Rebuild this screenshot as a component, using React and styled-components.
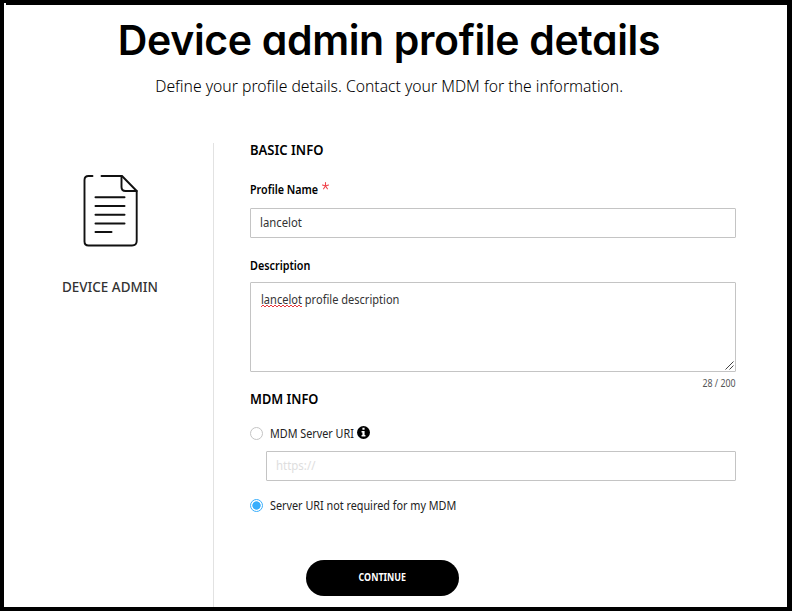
import React from "react";
import styled, { createGlobalStyle } from "styled-components";

const GlobalStyle = createGlobalStyle`
  * { box-sizing: border-box; }
  body { margin: 0; background: #fff; font-family: "Noto Sans", sans-serif; color: #000; }
`;

const Frame = styled.div`
  position: relative;
  display: flex;
  flex-direction: column;
  width: 792px;
  height: 611px;
  padding-top: 10px;
  border: solid #000;
  border-width: 5px 5px 4px 4px;
  background: #fff;
`;

const CornerNotch = styled.i`
  position: absolute;
  top: -2px;
  left: 0;
  width: 2px;
  height: 2px;
  background: #fff;
`;

/* Horizontally condensed run of text; `$x` is the width factor. */
const Narrow = styled.span`
  display: inline-block;
  white-space: nowrap;
  transform: scaleX(${(p) => p.$x});
  transform-origin: ${(p) => p.$from || "left"} center;
`;

const Title = styled.h1`
  margin: 0 0 10px;
  padding-right: 13px;
  text-align: center;
  font: 600 41px/50px Inter, sans-serif;
  font-feature-settings: "cv11";
  letter-spacing: -0.35px;
`;

const Subtitle = styled.p`
  margin: 0 0 46px;
  padding-right: 13px;
  text-align: center;
  font-size: 17px;
  line-height: 22px;
  font-weight: 300;
`;

const Columns = styled.div`
  display: flex;
  flex: 1;
`;

const Aside = styled.aside`
  display: flex;
  flex-direction: column;
  width: 210px;
  padding: 31px 0 0 58px;
  border-right: 1px solid #e2e2e2;
`;

const DocIcon = styled.svg`
  display: block;
  width: 58px;
  height: 74px;
  margin-left: 20px;
`;

const AsideLabel = styled.div`
  margin-top: 30px;
  font-size: 14px;
  line-height: 18px;
  font-weight: 500;
  color: #333;
`;

const Form = styled.main`
  display: flex;
  flex-direction: column;
  width: 522px;
  padding-left: 36px;
`;

const SectionTitle = styled.h2`
  margin: 0 0 ${(p) => p.$gap}px;
  font-size: 14px;
  line-height: 14px;
  font-weight: 600;
`;

const Label = styled.div`
  display: flex;
  height: 18px;
  margin-bottom: ${(p) => p.$gap}px;
  font-size: 13px;
  line-height: 18px;
  font-weight: 600;
`;

const LabelText = styled(Narrow)`
  width: ${(p) => p.$w}px;
`;

const Asterisk = styled.svg`
  width: 7px;
  height: 8px;
  margin-top: 2px;
`;

const Field = styled.div`
  height: 30px;
  margin: 0 0 ${(p) => p.$gap}px ${(p) => p.$indent || 0}px;
  padding: 4px 9px;
  border: 1px solid #c4c4c4;
  border-radius: 1px;
  font-size: 13px;
  line-height: 18px;
  color: ${(p) => (p.$placeholder ? "#dedede" : "#333")};
`;

const Area = styled(Field)`
  position: relative;
  height: 90px;
  padding: 7px 10px;
`;

const Squiggle = styled.svg`
  position: absolute;
  left: 10px;
  top: 21px;
`;

const Grip = styled.svg`
  position: absolute;
  right: 1px;
  bottom: 1px;
`;

const Counter = styled.div`
  margin-bottom: 2px;
  text-align: right;
  font-size: 10px;
  line-height: 14px;
  color: #555;
`;

const Option = styled.div`
  display: flex;
  height: 18px;
  margin-bottom: ${(p) => p.$gap}px;
  font-size: 13px;
  line-height: 18px;
  color: #222;
`;

const Radio = styled.i`
  width: 13px;
  height: 13px;
  margin: 3px 7px 0 0;
  border: 1px solid ${(p) => (p.$on ? "#38aefc" : "#c4c4c4")};
  border-radius: 50%;
  background: ${(p) => (p.$on ? "radial-gradient(circle, #38aefc 3.8px, #fff 4.5px)" : "#fff")};
`;

const OptionText = styled(Narrow)`
  width: ${(p) => p.$w}px;
`;

const InfoIcon = styled.svg`
  width: 13px;
  height: 13px;
  margin-top: 2px;
`;

const Button = styled.button`
  width: 153px;
  height: 36px;
  margin-left: 56px;
  padding: 0 0 2px;
  border: 0;
  border-radius: 18px;
  background: #000;
  color: #fff;
  font: 700 11px/18px "Noto Sans", sans-serif;
`;

export default function App() {
  return (
    <>
      <GlobalStyle />
      <Frame>
        <CornerNotch />
        <Title>Device admin profile details</Title>
        <Subtitle>
          <Narrow $x={0.924} $from="center">
            Define your profile details. Contact your MDM for the information.
          </Narrow>
        </Subtitle>
        <Columns>
          <Aside>
            <DocIcon viewBox="0 0 58 74" fill="none" stroke="#111" strokeWidth="1.9" strokeLinecap="round" strokeLinejoin="round">
              <path d="M10.5 2H6.5Q2.5 2 2.5 6V67.5Q2.5 71.5 6.5 71.5H50Q54.7 71.5 54.7 67V17L40 2H19.5" />
              <path d="M39.5 2V13Q39.5 17 43.5 17H54.7" />
              <path strokeWidth="2" d="M13.5 23.3H42.5M13.5 32H42.5M13.5 40.7H42.5M13.5 49.4H42.5M13.5 58.1H29.5" />
            </DocIcon>
            <AsideLabel><Narrow $x={0.96}>DEVICE ADMIN</Narrow></AsideLabel>
          </Aside>
          <Form>
            <SectionTitle $gap={23}><Narrow $x={0.93}>BASIC INFO</Narrow></SectionTitle>
            <Label $gap={10}>
              <LabelText $x={0.825} $w={72}>Profile Name</LabelText>
              <Asterisk viewBox="0 0 7 8" stroke="#f0434b" strokeWidth="1.1" strokeLinecap="round">
                <path d="M3.5 .6V4M3.5 4L.5 3M3.5 4L6.5 3M3.5 4L1.6 6.8M3.5 4L5.4 6.8" />
              </Asterisk>
            </Label>
            <Field $gap={18}><Narrow $x={0.87}>lancelot</Narrow></Field>
            <Label $gap={8}><LabelText $x={0.83} $w={62}>Description</LabelText></Label>
            <Area $gap={4}>
              <Narrow $x={0.85}>lancelot profile description</Narrow>
              <Squiggle width="42" height="4" viewBox="0 0 42 4" fill="none" stroke="#e8383d" strokeWidth="1">
                <path d="M0 3L2 1L4 3L6 1L8 3L10 1L12 3L14 1L16 3L18 1L20 3L22 1L24 3L26 1L28 3L30 1L32 3L34 1L36 3L38 1L40 3L41 2" />
              </Squiggle>
              <Grip width="9" height="9" viewBox="0 0 9 9" stroke="#444" strokeWidth="1">
                <path d="M.5 8.5L8.5 .5M4.5 8.5L8.5 4.5" />
              </Grip>
            </Area>
            <Counter><Narrow $x={0.88} $from="right">28 / 200</Narrow></Counter>
            <SectionTitle $gap={18}><Narrow $x={0.915}>MDM INFO</Narrow></SectionTitle>
            <Option $gap={9}>
              <Radio />
              <OptionText $x={0.83} $w={87}>MDM Server URI</OptionText>
              <InfoIcon viewBox="0 0 12 12">
                <circle cx="6" cy="6" r="6" fill="#000" />
                <path fill="#fff" d="M5 1.7H7V3.5H5ZM4.2 4.6H7V8.4H7.8V9.8H4.2V8.4H5V6H4.2Z" />
              </InfoIcon>
            </Option>
            <Field $gap={15} $indent={16} $placeholder><Narrow $x={0.88}>https://</Narrow></Field>
            <Option $gap={46}>
              <Radio $on />
              <OptionText $x={0.832} $w={200}>Server URI not required for my MDM</OptionText>
            </Option>
            <Button><Narrow $x={0.81} $from="center">CONTINUE</Narrow></Button>
          </Form>
        </Columns>
      </Frame>
    </>
  );
}
